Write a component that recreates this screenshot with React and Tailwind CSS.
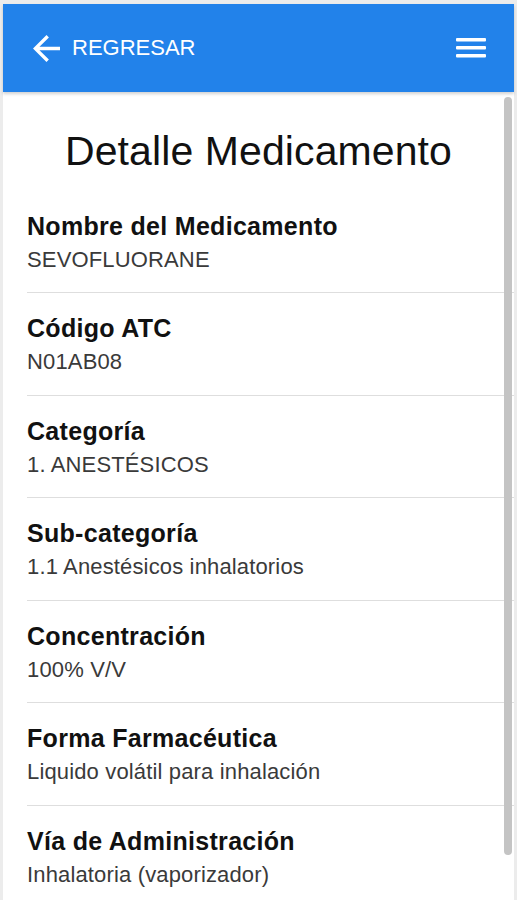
import React from "react";

const fields = [
  { label: "Nombre del Medicamento", value: "SEVOFLUORANE" },
  { label: "Código ATC", value: "N01AB08" },
  { label: "Categoría", value: "1. ANESTÉSICOS" },
  { label: "Sub-categoría", value: "1.1 Anestésicos inhalatorios" },
  { label: "Concentración", value: "100% V/V" },
  { label: "Forma Farmacéutica", value: "Liquido volátil para inhalación" },
  { label: "Vía de Administración", value: "Inhalatoria (vaporizador)" },
];

const App = () => {
  return (
    <div
      className="h-[900px] overflow-hidden bg-[#ececec] pl-[3px] pr-[3px] pt-[4px]"
      style={{ fontFamily: '"Liberation Sans", Arial, sans-serif' }}
    >
      {/* Header */}
      <header className="relative z-10 flex h-[88px] items-center justify-between bg-[#2282ea] pl-[30px] pr-[28px] shadow-[0_2px_3px_rgba(0,0,0,0.18)]">
        <div className="flex items-center gap-[12px] text-white">
          <svg width="27" height="27" viewBox="4 4 16 16" fill="currentColor">
            <path d="M20 11H7.83l5.59-5.59L12 4l-8 8 8 8 1.41-1.41L7.83 13H20v-2z" />
          </svg>
          <span className="text-[22px] leading-none">REGRESAR</span>
        </div>
        <svg width="30" height="20" viewBox="0 0 30 20" fill="white">
          <rect x="0" y="0" width="30" height="3.4" rx="1" />
          <rect x="0" y="8" width="30" height="3.4" rx="1" />
          <rect x="0" y="16" width="30" height="3.4" rx="1" />
        </svg>
      </header>

      {/* Content */}
      <main className="relative h-[808px] overflow-hidden bg-white">
        <h1 className="pt-[35px] text-center text-[41px] leading-[48px] tracking-[0.1px] text-[#111]">
          Detalle Medicamento
        </h1>

        <div className="mt-[15.5px]">
          {fields.map((field, index) => (
            <div
              key={index}
              className={`ml-[24px] pb-[17.5px] pt-[20px] ${
                index > 0 ? "border-t border-[#dedede]" : ""
              }`}
            >
              <p className="text-[25px] font-bold leading-[30px] tracking-[0.3px] text-[#111]">
                {field.label}
              </p>
              <p className="mt-1 text-[22px] leading-[30px] tracking-[0.15px] text-[#3a3a3a]">
                {field.value}
              </p>
            </div>
          ))}
        </div>

        {/* scrollbar thumb */}
        <div className="absolute right-[2px] top-[5px] h-[758px] w-[8px] rounded-full bg-[#c4c4c4]"></div>
      </main>
    </div>
  );
};

export default App;
